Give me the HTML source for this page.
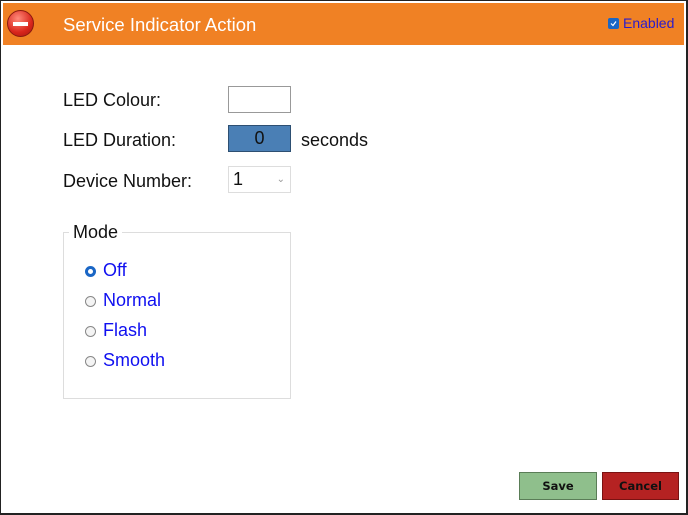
<!DOCTYPE html>
<html><head><meta charset="utf-8"><style>
*{box-sizing:border-box;margin:0;padding:0}
body{width:688px;height:515px;background:#fff;font-family:"Liberation Sans",Arial,sans-serif;position:relative;overflow:hidden}
.frame{position:absolute;left:0;top:0;width:688px;height:515px;border:1px solid #222;border-right:2px solid #222;border-bottom:2px solid #222}
.hdr{position:absolute;left:3px;top:3px;width:681px;height:42px;background:#f08124}
.title{position:absolute;left:63px;top:14px;color:#fff;font-size:18.5px}
.ico{position:absolute;left:7px;top:10px;width:27px;height:27px;border-radius:50%;background:radial-gradient(circle at 40% 30%,#ff8a7a,#d9261c 60%,#a5150f);border:1px solid #8b1a10}
.ico:after{content:"";position:absolute;left:5px;top:11px;width:15px;height:4px;background:#fff}
.en{position:absolute;left:608px;top:15px;font-size:14px;color:#2a1ccc}
.cb{display:inline-block;width:11px;height:11px;background:#1a66c5;border-radius:2px;vertical-align:-1px;margin-right:4px;position:relative}
.lbl{position:absolute;left:63px;font-size:18px;color:#111}
.box{position:absolute;left:228px;width:63px;height:27px;border:1px solid #999}
.fs{position:absolute;left:63px;top:232px;width:228px;height:167px;border:1px solid #ddd}
.leg{position:absolute;left:69px;top:222px;background:#fff;padding:0 4px;font-size:18px;color:#111}
.r{position:absolute;left:85px;font-size:18px;color:#1010f0}
.r i{position:absolute;left:0;top:5px;width:11px;height:11px;border-radius:50%;border:1px solid #888;background:#f4f4f4}
.r span{position:absolute;left:18px;top:-1px;white-space:nowrap}
.btn{position:absolute;top:472px;height:28px;font-family:"DejaVu Sans","Liberation Sans",sans-serif;font-weight:bold;font-size:11.5px;text-align:center;line-height:26px}
</style></head><body>
<div class="frame"></div>
<div class="hdr"></div>
<div class="ico"></div>
<div class="title">Service Indicator Action</div>
<div class="en"><span class="cb"><svg width="11" height="11" style="position:absolute;left:0;top:0"><path d="M3 5.5l2 2 3-4" stroke="#fff" stroke-width="1.2" fill="none"/></svg></span>Enabled</div>
<div class="lbl" style="top:90px">LED Colour:</div>
<div class="box" style="top:86px"></div>
<div class="lbl" style="top:130px">LED Duration:</div>
<div class="box" style="top:125px;background:#4a7fb5;border-color:#2d4f72;text-align:center;font-size:18px;line-height:25px;color:#111">0</div>
<div class="lbl" style="left:301px;top:130px">seconds</div>
<div class="lbl" style="top:171px">Device Number:</div>
<div class="box" style="top:166px;border-color:#ddd;font-size:18px;line-height:25px;padding-left:4px;color:#111">1<span style="position:absolute;right:5px;top:0;font-size:10px;color:#999">&#8964;</span></div>
<div class="fs"></div>
<div class="leg">Mode</div>
<div class="r" style="top:261px"><i style="border:3px solid #1a66c5;background:#fff"></i><span>Off</span></div>
<div class="r" style="top:291px"><i></i><span>Normal</span></div>
<div class="r" style="top:321px"><i></i><span>Flash</span></div>
<div class="r" style="top:351px"><i></i><span>Smooth</span></div>
<div class="btn" style="left:519px;width:78px;background:#8fbf8c;border:1px solid #5a7d57;color:#111">Save</div>
<div class="btn" style="left:602px;width:77px;background:#b52222;border:1px solid #7a1212;color:#111">Cancel</div>
</body></html>
